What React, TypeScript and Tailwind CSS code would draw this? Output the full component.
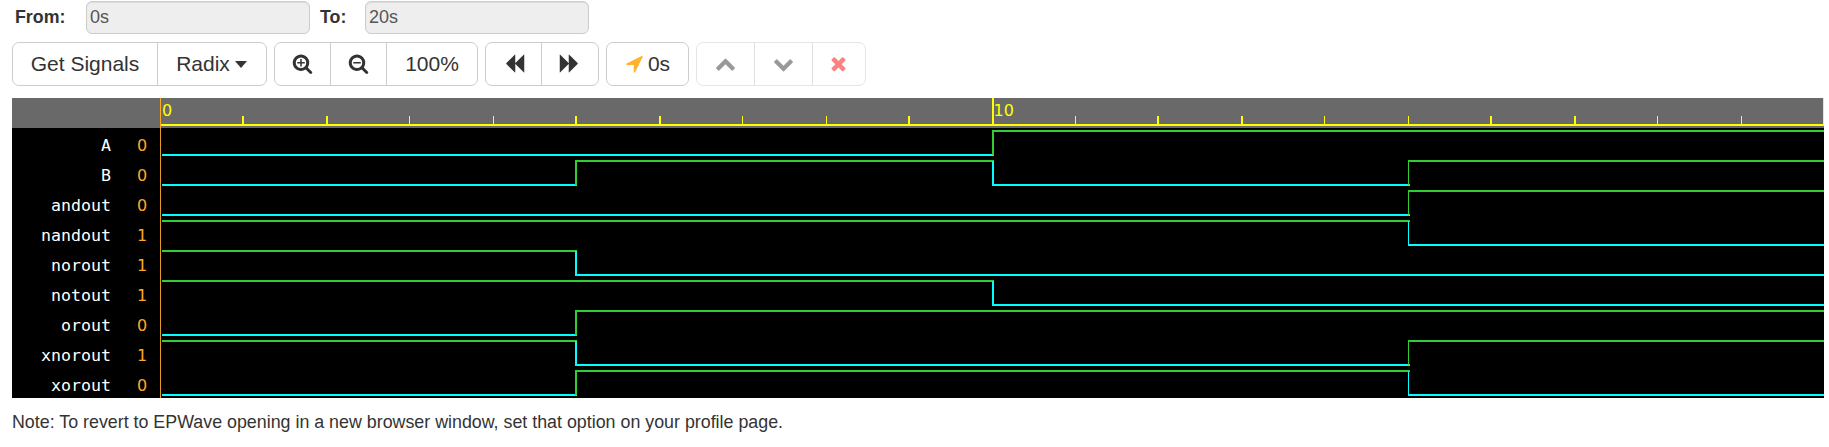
import React from "react";

const icons = {
  zoomIn:
    "M1088 800v64q0 13-9.5 22.5t-22.5 9.5h-224v224q0 13-9.5 22.5t-22.5 9.5h-64q-13 0-22.5-9.5t-9.5-22.5v-224h-224q-13 0-22.5-9.5t-9.5-22.5v-64q0-13 9.5-22.5t22.5-9.5h224v-224q0-13 9.5-22.5t22.5-9.5h64q13 0 22.5 9.5t9.5 22.5v224h224q13 0 22.5 9.5t9.5 22.5zm128 32q0-185-131.5-316.5t-316.5-131.5-316.5 131.5-131.5 316.5 131.5 316.5 316.5 131.5 316.5-131.5 131.5-316.5zm512 832q0 53-37.5 90.5t-90.5 37.5q-54 0-90-38l-343-342q-179 124-399 124-143 0-273.5-55.5t-225-150-150-225-55.5-273.5 55.5-273.5 150-225 225-150 273.5-55.5 273.5 55.5 225 150 150 225 55.5 273.5q0 220-124 399l343 343q37 37 37 90z",
  zoomOut:
    "M1088 800v64q0 13-9.5 22.5t-22.5 9.5h-576q-13 0-22.5-9.5t-9.5-22.5v-64q0-13 9.5-22.5t22.5-9.5h576q13 0 22.5 9.5t9.5 22.5zm128 32q0-185-131.5-316.5t-316.5-131.5-316.5 131.5-131.5 316.5 131.5 316.5 316.5 131.5 316.5-131.5 131.5-316.5zm512 832q0 53-37.5 90.5t-90.5 37.5q-54 0-90-38l-343-342q-179 124-399 124-143 0-273.5-55.5t-225-150-150-225-55.5-273.5 55.5-273.5 150-225 225-150 273.5-55.5 273.5 55.5 225 150 150 225 55.5 273.5q0 220-124 399l343 343q37 37 37 90z",
  backward:
    "M1683 141q19-19 32-13t13 32v1472q0 26-13 32t-32-13l-710-710q-9-9-13-19v710q0 26-13 32t-32-13l-710-710q-19-19-19-45t19-45l710-710q19-19 32-13t13 32v710q4-10 13-19z",
  arrow:
    "M1593 349l-640 1280q-17 35-57 35-5 0-15-2-22-5-35.5-22.5t-13.5-39.5v-576h-576q-22 0-39.5-13.5t-22.5-35.5 4-42 29-30l1280-640q13-7 29-7 27 0 45 19 15 14 18.5 34.5t-6.5 39.5z",
  up:
    "M1683 1331l-166 165q-19 19-45 19t-45-19l-531-531-531 531q-19 19-45 19t-45-19l-166-165q-19-19-19-45.5t19-45.5l742-741q19-19 45-19t45 19l742 741q19 19 19 45.5t-19 45.5z",
  down:
    "M1683 808l-742 741q-19 19-45 19t-45-19l-742-741q-19-19-19-45.5t19-45.5l166-165q19-19 45-19t45 19l531 531 531-531q19-19 45-19t45 19l166 165q19 19 19 45.5t-19 45.5z",
  times:
    "M1490 1322q0 40-28 68l-136 136q-28 28-68 28t-68-28l-294-294-294 294q-28 28-68 28t-68-28l-136-136q-28-28-28-68t28-68l294-294-294-294q-28-28-28-68t28-68l136-136q28-28 68-28t68 28l294 294 294-294q28-28 68-28t68 28l136 136q28 28 28 68t-28 68l-294 294 294 294q28 28 28 68z",
};

function Icon({ d, className = "" }: { d: string; className?: string }) {
  return (
    <svg viewBox="0 0 1792 1792" className={`mb-[1.4px] h-[21px] w-[21px] shrink-0 fill-current ${className}`}>
      <path d={d} />
    </svg>
  );
}

function Group({ className = "", children }: { className?: string; children: React.ReactNode }) {
  return (
    <div className={`flex h-11 divide-x rounded-[7px] border bg-white ${className}`}>
      {children}
    </div>
  );
}

function Btn({ className = "", children }: { className?: string; children: React.ReactNode }) {
  return (
    <button className={`flex items-center justify-center whitespace-nowrap ${className}`}>{children}</button>
  );
}

// Pixel columns of the ruler marks: [x, width]
const ticks: [number, number][] = [
  [242, 2], [326, 2], [409, 1], [493, 1], [575, 2], [659, 2], [742, 1], [826, 1], [908, 2],
  [1075, 1], [1157, 2], [1241, 2], [1324, 1], [1408, 1], [1490, 2], [1574, 2], [1657, 1], [1741, 1],
];

// Edge columns at 5s, 10s and 15s: [x, width]
const edges: [number, number][] = [[575, 2], [992, 2], [1408, 1]];

const signals = [
  { name: "A", levels: [0, 0, 1, 1] },
  { name: "B", levels: [0, 1, 0, 1] },
  { name: "andout", levels: [0, 0, 0, 1] },
  { name: "nandout", levels: [1, 1, 1, 0] },
  { name: "norout", levels: [1, 0, 0, 0] },
  { name: "notout", levels: [1, 1, 0, 0] },
  { name: "orout", levels: [0, 1, 1, 1] },
  { name: "xnorout", levels: [1, 0, 0, 1] },
  { name: "xorout", levels: [0, 1, 1, 0] },
];

const color = (level: number) => (level ? "#32cd32" : "#00ffff");

function Trace({ levels }: { levels: number[] }) {
  const starts = [162, 575, 992, 1408];
  const ends = [577, 994, 1410, 1824];
  return (
    <svg viewBox="160 0 1664 30" className="h-[30px] w-[1664px] shrink-0" shapeRendering="crispEdges">
      {levels.map((l, i) => (
        <rect
          key={i}
          x={starts[i]}
          y={l ? 2 : 26}
          width={(levels[i + 1] === l ? starts[i + 1] : ends[i]) - starts[i]}
          height={2}
          fill={color(l)}
        />
      ))}
      {edges.map(([x, w], i) =>
        levels[i] === levels[i + 1] ? null : (
          <rect key={x} x={x} y={3} width={w} height={24} fill={color(levels[i + 1])} />
        ),
      )}
      <rect x={160} y={0} width={1} height={30} fill="#e09a1f" />
    </svg>
  );
}

function Field({ value }: { value: string }) {
  return (
    <input
      readOnly
      value={value}
      className="h-[33px] w-56 rounded-[6px] border border-[#ccc] bg-[#eee] px-[3px] text-[18px] text-[#555] shadow-[inset_0_1px_1px_rgba(0,0,0,0.075)] outline-none"
    />
  );
}

export default function App() {
  return (
    <div className="h-[447px] w-[1829px] overflow-hidden bg-white pl-3 font-['Liberation_Sans',Arial,sans-serif] text-[#333]">
      <div className="flex h-[42px] items-start pt-px text-[17.8px] font-bold">
        <label className="w-[74px] pl-[3px] leading-[32px]">From:</label>
        <div className="font-normal"><Field value="0s" /></div>
        <label className="w-[55px] pl-[10px] leading-[32px]">To:</label>
        <div className="font-normal"><Field value="20s" /></div>
      </div>

      <div className="flex h-14 items-start text-[21px]">
        <Group className="mr-[7px] w-[255px] divide-[#ccc] border-[#ccc]">
          <Btn className="w-[145px]">Get Signals</Btn>
          <Btn className="flex-1 gap-[5px] pr-px">
            Radix
            <svg viewBox="0 0 12 7" className="h-[7px] w-3 fill-current"><path d="M0 0h12L6 7z" /></svg>
          </Btn>
        </Group>
        <Group className="mr-[7px] w-[204px] divide-[#ccc] border-[#ccc]">
          <Btn className="w-[56px]"><Icon d={icons.zoomIn} /></Btn>
          <Btn className="w-[56px]"><Icon d={icons.zoomOut} /></Btn>
          <Btn className="flex-1">100%</Btn>
        </Group>
        <Group className="mr-[7px] w-[114px] divide-[#ccc] border-[#ccc]">
          <Btn className="w-[56px] pl-px"><Icon d={icons.backward} /></Btn>
          <Btn className="flex-1 pr-px"><Icon d={icons.backward} className="-scale-x-100" /></Btn>
        </Group>
        <Group className="mr-[7px] w-[83px] divide-[#ccc] border-[#ccc]">
          <Btn className="flex-1 gap-[3px] pr-px">
            <Icon d={icons.arrow} className="text-[#ffb22e]" />
            0s
          </Btn>
        </Group>
        <Group className="w-[170px] divide-[#e0e0e0] border-[#e5e5e5]">
          <Btn className="w-[58px] text-[#999]"><Icon d={icons.up} /></Btn>
          <Btn className="w-[58px] text-[#999]"><Icon d={icons.down} /></Btn>
          <Btn className="flex-1 pr-[2px] text-[#ff8080]"><Icon d={icons.times} /></Btn>
        </Group>
      </div>

      <div className="w-[1812px] bg-black">
        <div className="flex h-[30px] bg-[#696969]">
          <div className="w-[148px]" />
          <svg viewBox="160 98 1664 30" className="h-[30px] w-[1664px] shrink-0" shapeRendering="crispEdges">
            <g fill="#ffff00">
              <rect x={161} y={124} width={1663} height={2} />
              {ticks.map(([x, w]) => <rect key={x} x={x} y={116} width={w} height={8} />)}
              <rect x={992} y={98} width={2} height={26} />
              <rect x={1823} y={98} width={1} height={26} />
              <g className="font-['DejaVu_Sans',sans-serif] text-[16px]">
                <text x={162} y={116}>0</text>
                <text x={993.5} y={116}>10</text>
              </g>
            </g>
            <rect x={160} y={98} width={1} height={30} fill="#ffa922" />
          </svg>
        </div>
        {signals.map((s) => (
          <div key={s.name} className="flex h-[30px]">
            <div className="w-[99px] text-right font-['DejaVu_Sans_Mono',monospace] text-[16.6px] leading-[36px] text-white">
              {s.name}
            </div>
            <div className="w-[49px] pl-[26px] font-['DejaVu_Sans',sans-serif] text-[16px] leading-[36px] text-[#ffa922]">
              {s.levels[0]}
            </div>
            <Trace levels={s.levels} />
          </div>
        ))}
      </div>

      <p className="pt-[12px] text-[17.84px] leading-[25px]">
        Note: To revert to EPWave opening in a new browser window, set that option on your profile page.
      </p>
    </div>
  );
}
